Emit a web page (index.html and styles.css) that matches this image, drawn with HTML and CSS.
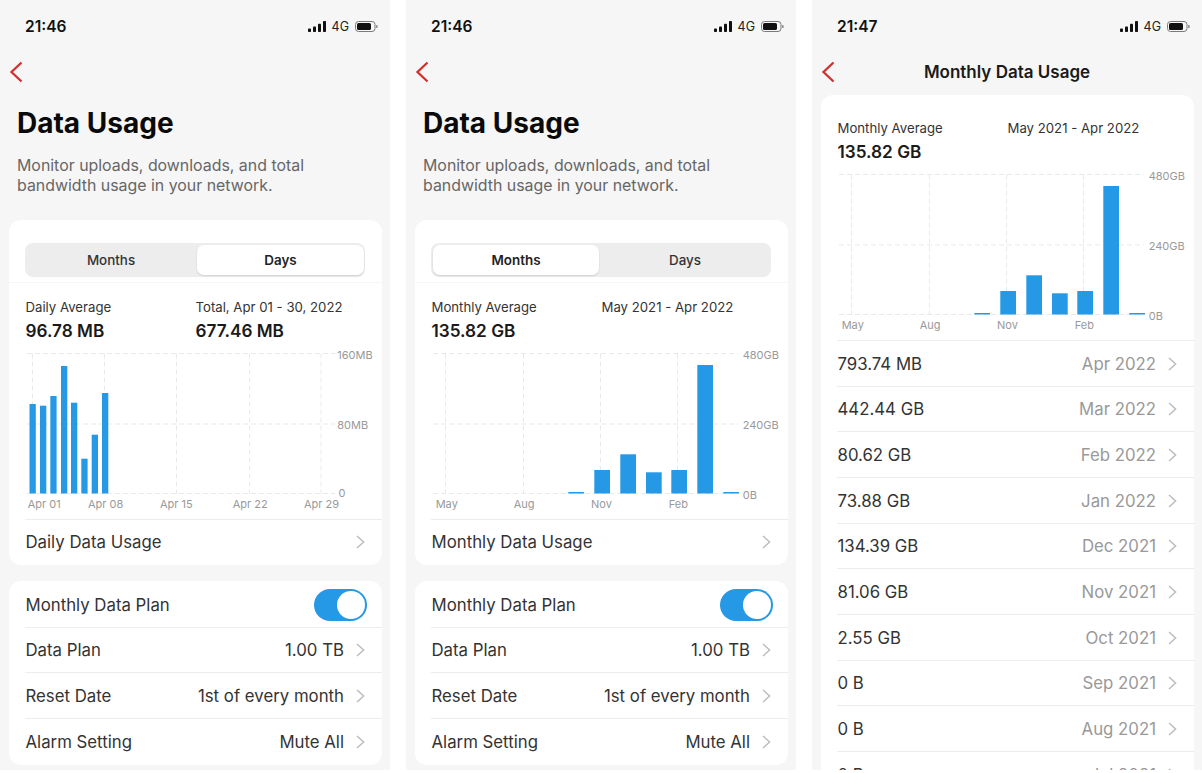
FILE: index.html
```html
<!DOCTYPE html>
<html lang="en">
<head>
<meta charset="utf-8">
<title>Data Usage</title>
<link rel="stylesheet" href="styles.css">
</head>
<body>
<svg class="defs" width="0" height="0" aria-hidden="true">
  <defs>
    <symbol id="chev" viewBox="0 0 9 14"><path d="M1 1l6.6 6L1 13" fill="none" stroke="#bdbdbd" stroke-width="1.5"/></symbol>
    <symbol id="back" viewBox="0 0 14 22"><path d="M12.5 1.5L2.5 11l10 9.5" fill="none" stroke="#d2302f" stroke-width="2.3"/></symbol>
    <symbol id="signal" viewBox="0 0 18 11"><rect x="0" y="7.5" width="3" height="3.5" rx=".8"/><rect x="5" y="5.5" width="3" height="5.5" rx=".8"/><rect x="10" y="2.8" width="3" height="8.2" rx=".8"/><rect x="15" y="0" width="3" height="11" rx=".8"/></symbol>
    <symbol id="batt" viewBox="0 0 23 11"><rect x=".5" y=".5" width="19.5" height="10" rx="3" fill="none" stroke="#7a7a7a"/><rect x="2" y="2" width="14" height="7" rx="1.6"/><rect x="21.2" y="4" width="1.3" height="3" rx=".6" fill="#7a7a7a"/></symbol>
    <g id="monthly">
      <g class="grid">
        <line x1="18" x2="323" y1="9.5" y2="9.5"/><line x1="18" x2="323" y1="80" y2="80"/><line x1="18" x2="323" y1="149.5" y2="149.5"/>
        <line x1="30.5" x2="30.5" y1="9.5" y2="149.5"/><line x1="108.5" x2="108.5" y1="9.5" y2="149.5"/><line x1="185.5" x2="185.5" y1="9.5" y2="149.5"/><line x1="262.5" x2="262.5" y1="9.5" y2="149.5"/>
      </g>
      <g class="bars">
        <rect x="153.3" y="148" width="15.7" height="1.5"/><rect x="179.3" y="126" width="15.7" height="23.5"/><rect x="205.3" y="110.3" width="15.7" height="39.2"/><rect x="231" y="128.3" width="15.7" height="21.2"/><rect x="256.3" y="126" width="15.7" height="23.5"/><rect x="282.3" y="21" width="15.7" height="128.5"/><rect x="308.3" y="148" width="15.7" height="1.5"/>
      </g>
      <g class="tick">
        <text x="327.7" y="15">480GB</text><text x="327.7" y="84.5">240GB</text><text x="327.7" y="154.5">0B</text>
        <text x="20.7" y="164">May</text><text x="98.7" y="164">Aug</text><text x="176" y="164">Nov</text><text x="253.7" y="164">Feb</text>
      </g>
    </g>
  </defs>
</svg>

<main class="screens">

  <section class="phone">
    <header class="status">
      <span class="time">21:46</span>
      <span class="sys"><svg class="sig"><use href="#signal"/></svg><span class="net">4G</span><svg class="bat"><use href="#batt"/></svg></span>
    </header>
    <nav class="nav"><svg class="back"><use href="#back"/></svg></nav>
    <h1 class="title">Data Usage</h1>
    <p class="intro">Monitor uploads, downloads, and total bandwidth usage in your network.</p>

    <div class="card chart-card">
      <div class="seg">
        <span class="seg-item">Months</span>
        <span class="seg-item on">Days</span>
      </div>
      <div class="stats">
        <div><div class="stat-label">Daily Average</div><div class="stat-value">96.78 MB</div></div>
        <div><div class="stat-label">Total, Apr 01 - 30, 2022</div><div class="stat-value">677.46 MB</div></div>
      </div>
      <svg class="chart" viewBox="0 0 373 175">
        <g class="grid">
          <line x1="18" x2="326" y1="9.5" y2="9.5"/><line x1="18" x2="326" y1="80" y2="80"/><line x1="18" x2="326" y1="149.5" y2="149.5"/>
          <line x1="23.5" x2="23.5" y1="9.5" y2="149.5"/><line x1="95.5" x2="95.5" y1="9.5" y2="149.5"/><line x1="167.5" x2="167.5" y1="9.5" y2="149.5"/><line x1="240.5" x2="240.5" y1="9.5" y2="149.5"/><line x1="312" x2="312" y1="9.5" y2="149.5"/>
        </g>
        <g class="bars">
          <rect x="20.5" y="60" width="6.3" height="89.5"/><rect x="31" y="61.7" width="6.3" height="87.8"/><rect x="41.3" y="52" width="6.3" height="97.5"/><rect x="52" y="22" width="6.3" height="127.5"/><rect x="62" y="58.7" width="6.3" height="90.8"/><rect x="72.3" y="114.7" width="6.3" height="34.8"/><rect x="82.7" y="90.7" width="6.3" height="58.8"/><rect x="93" y="49" width="6.3" height="100.5"/>
        </g>
        <g class="tick">
          <text x="328.3" y="14.5">160MB</text><text x="328.3" y="84.5">80MB</text><text x="329.5" y="153">0</text>
          <text x="18.7" y="164">Apr 01</text><text x="79" y="164">Apr 08</text><text x="151" y="164">Apr 15</text><text x="223.7" y="164">Apr 22</text><text x="295" y="164">Apr 29</text>
        </g>
      </svg>
      <div class="row"><span class="row-key">Daily Data Usage</span><svg class="chev"><use href="#chev"/></svg></div>
    </div>

    <div class="card plan-card">
      <div class="row"><span class="row-key">Monthly Data Plan</span><span class="toggle"><span class="knob"></span></span></div>
      <div class="row"><span class="row-key">Data Plan</span><span class="row-val">1.00 TB</span><svg class="chev"><use href="#chev"/></svg></div>
      <div class="row"><span class="row-key">Reset Date</span><span class="row-val">1st of every month</span><svg class="chev"><use href="#chev"/></svg></div>
      <div class="row"><span class="row-key">Alarm Setting</span><span class="row-val">Mute All</span><svg class="chev"><use href="#chev"/></svg></div>
    </div>
  </section>

  <section class="phone">
    <header class="status">
      <span class="time">21:46</span>
      <span class="sys"><svg class="sig"><use href="#signal"/></svg><span class="net">4G</span><svg class="bat"><use href="#batt"/></svg></span>
    </header>
    <nav class="nav"><svg class="back"><use href="#back"/></svg></nav>
    <h1 class="title">Data Usage</h1>
    <p class="intro">Monitor uploads, downloads, and total bandwidth usage in your network.</p>

    <div class="card chart-card">
      <div class="seg">
        <span class="seg-item on">Months</span>
        <span class="seg-item">Days</span>
      </div>
      <div class="stats">
        <div><div class="stat-label">Monthly Average</div><div class="stat-value">135.82 GB</div></div>
        <div><div class="stat-label">May 2021 - Apr 2022</div></div>
      </div>
      <svg class="chart" viewBox="0 0 373 175"><use href="#monthly"/></svg>
      <div class="row"><span class="row-key">Monthly Data Usage</span><svg class="chev"><use href="#chev"/></svg></div>
    </div>

    <div class="card plan-card">
      <div class="row"><span class="row-key">Monthly Data Plan</span><span class="toggle"><span class="knob"></span></span></div>
      <div class="row"><span class="row-key">Data Plan</span><span class="row-val">1.00 TB</span><svg class="chev"><use href="#chev"/></svg></div>
      <div class="row"><span class="row-key">Reset Date</span><span class="row-val">1st of every month</span><svg class="chev"><use href="#chev"/></svg></div>
      <div class="row"><span class="row-key">Alarm Setting</span><span class="row-val">Mute All</span><svg class="chev"><use href="#chev"/></svg></div>
    </div>
  </section>

  <section class="phone">
    <header class="status">
      <span class="time">21:47</span>
      <span class="sys"><svg class="sig"><use href="#signal"/></svg><span class="net">4G</span><svg class="bat"><use href="#batt"/></svg></span>
    </header>
    <nav class="nav nav-titled"><svg class="back"><use href="#back"/></svg><span class="nav-title">Monthly Data Usage</span></nav>

    <div class="card detail-card">
      <div class="stats">
        <div><div class="stat-label">Monthly Average</div><div class="stat-value">135.82 GB</div></div>
        <div><div class="stat-label">May 2021 - Apr 2022</div></div>
      </div>
      <svg class="chart" viewBox="0 0 373 175"><use href="#monthly"/></svg>
      <div class="row list"><span class="row-key">793.74 MB</span><span class="row-date">Apr 2022</span><svg class="chev"><use href="#chev"/></svg></div>
      <div class="row list"><span class="row-key">442.44 GB</span><span class="row-date">Mar 2022</span><svg class="chev"><use href="#chev"/></svg></div>
      <div class="row list"><span class="row-key">80.62 GB</span><span class="row-date">Feb 2022</span><svg class="chev"><use href="#chev"/></svg></div>
      <div class="row list"><span class="row-key">73.88 GB</span><span class="row-date">Jan 2022</span><svg class="chev"><use href="#chev"/></svg></div>
      <div class="row list"><span class="row-key">134.39 GB</span><span class="row-date">Dec 2021</span><svg class="chev"><use href="#chev"/></svg></div>
      <div class="row list"><span class="row-key">81.06 GB</span><span class="row-date">Nov 2021</span><svg class="chev"><use href="#chev"/></svg></div>
      <div class="row list"><span class="row-key">2.55 GB</span><span class="row-date">Oct 2021</span><svg class="chev"><use href="#chev"/></svg></div>
      <div class="row list"><span class="row-key">0 B</span><span class="row-date">Sep 2021</span><svg class="chev"><use href="#chev"/></svg></div>
      <div class="row list"><span class="row-key">0 B</span><span class="row-date">Aug 2021</span><svg class="chev"><use href="#chev"/></svg></div>
      <div class="row list"><span class="row-key">0 B</span><span class="row-date">Jul 2021</span><svg class="chev"><use href="#chev"/></svg></div>
    </div>
  </section>

</main>
</body>
</html>
```
FILE: styles.css
```css
* { box-sizing: border-box; }
html, body { margin: 0; padding: 0; background: #fff; }
body { font-family: Inter, "Noto Sans", sans-serif; color: #333; overflow: hidden; height: 773px; }
.defs { position: absolute; }

.screens { display: flex; gap: 16px; width: 1202px; }
.phone { width: 390px; height: 770px; background: #f6f6f6; overflow: hidden; flex: none; }

.status { height: 52px; display: flex; justify-content: space-between; align-items: center; padding: 0 12px 0 25px; }
.time { font-size: 15.5px; font-weight: 600; color: #111; }
.sys { display: flex; align-items: center; }
.sig { width: 18px; height: 11px; fill: #111; margin-right: 6px; }
.net { font-size: 12.5px; color: #222; margin-right: 6px; }
.bat { width: 23px; height: 11px; fill: #111; }

.nav { height: 40px; padding-left: 9px; display: flex; align-items: center; }
.back { width: 14px; height: 22px; flex: none; }
.nav-titled { display: grid; grid-template-columns: 1fr auto 1fr; height: 43px; padding: 0 0 3px 9px; }
.nav-title { font-size: 17px; font-weight: 600; color: #1a1a1a; grid-column: 2; margin-right: 9px; }
.nav-titled .back { grid-column: 1; grid-row: 1; }

.title { margin: 11px 0 0; padding-left: 17px; font-size: 28px; line-height: 40px; font-weight: 700; color: #0a0a0a; }
.intro { margin: 13px 0 0; padding: 0 80px 0 17px; font-size: 15.9px; line-height: 19.5px; color: #666; }

.card { background: #fff; border-radius: 12px; margin: 0 8px 0 9px; width: 373px; overflow: hidden; }
.chart-card { margin-top: 24.5px; padding-top: 23px; height: 345px; }
.plan-card { margin-top: 16px; height: 184px; }
.detail-card { padding-top: 25px; height: 700px; margin-left: 9px; }

.seg { display: grid; grid-template-columns: 1fr 1fr; height: 34px; margin: 0 17px 0 16px; background: #ededed; border-radius: 8px; padding: 2px; font-size: 13.4px; }
.seg-item { display: flex; align-items: center; justify-content: center; color: #333; font-weight: 500; border-radius: 7px; }
.seg-item.on { background: #fff; color: #222; font-weight: 600; box-shadow: 0 1px 2px rgba(0,0,0,.12); }
.seg-item.on:first-child { margin-right: 2px; }
.seg-item.on:last-child { margin: 0 -1px 0 2px; }

.stats { display: grid; grid-template-columns: 170px 1fr; padding-left: 16.5px; margin-top: 5px; height: 62px; border-top: 1px solid #f6f6f6; padding-top: 16px; }
.detail-card .stats { margin-top: 0; border-top: 0; padding-top: 0; height: 45px; }
.stat-label { font-size: 13.2px; line-height: 16px; color: #333; }
.stat-value { font-size: 17.2px; line-height: 22px; margin-top: 5px; font-weight: 600; color: #1a1a1a; }

.chart { display: block; width: 373px; height: 175px; }
.grid line { stroke: #e9e9e9; stroke-width: 1; stroke-dasharray: 5 3; }
.bars rect { fill: #2699e6; }
.tick text { font-family: Inter, "Noto Sans", sans-serif; font-size: 11px; fill: #999; }

.row { display: flex; align-items: center; height: 45.67px; margin-left: 16px; padding: 1px 17px 0 0.5px; border-top: 1px solid #ebedef; font-size: 16.8px; }
.plan-card .row:first-child { border-top: 0; height: 46px; padding-top: 2px; }
.row-key { margin-right: auto; color: #333; }
.row-val { color: #333; margin-right: 12px; }
.row-date { color: #999; margin-right: 12px; }
.chev { width: 9px; height: 14px; flex: none; }

.toggle { width: 53px; height: 32px; border-radius: 16px; background: #2699e6; padding: 2px; display: flex; justify-content: flex-end; margin-right: -2px; }
.knob { width: 28px; height: 28px; border-radius: 50%; background: #fff; }
```
